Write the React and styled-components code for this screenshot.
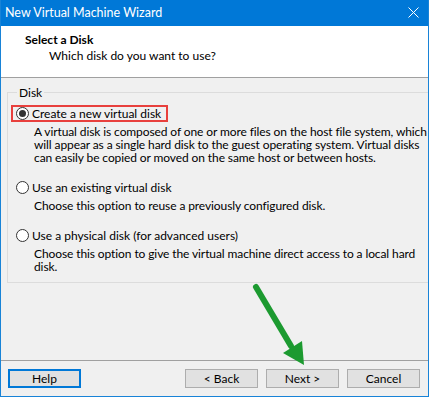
import React from 'react'
import styled, { createGlobalStyle } from 'styled-components'

const GlobalStyle = createGlobalStyle`
    html, body {
        margin: 0;
        padding: 0;
        background: #f0f0f0;
    }
    body {
        font-family: Lato, "Noto Sans", sans-serif;
        font-size: 12px;
        color: #000;
    }
`

const Window = styled.div`
    position: relative;
    width: 429px;
    height: 397px;
    box-sizing: border-box;
    border: 1px solid #1883d7;
    border-top: none;
    background: #f0f0f0;
    display: flex;
    flex-direction: column;
    overflow: hidden;
`

const TitleBar = styled.div`
    height: 25px;
    background: #0078d7;
    color: #fff;
    display: flex;
    align-items: center;
    justify-content: space-between;
    padding: 0 0 1px 4px;
    font-size: 12.5px;
`

const CloseButton = styled.div`
    width: 30px;
    height: 25px;
    display: flex;
    align-items: center;
    justify-content: center;
`

const Header = styled.div`
    height: 52px;
    background: #fff;
    border-bottom: 1px solid #a0a0a0;
    box-sizing: border-box;
    padding: 6px 0 0 24px;
`

const HeaderTitle = styled.div`
    font-weight: bold;
    line-height: 16px;
`

const HeaderSub = styled.div`
    padding-left: 24px;
    line-height: 16px;
`

const Body = styled.div`
    flex: 1;
    padding: 8px 8px 0 6px;
`

const Group = styled.fieldset`
    margin: 0;
    padding: 6px 2px 10px 4px;
    border: 1px solid #dcdcdc;
    height: 197px;
    box-sizing: border-box;
    display: flex;
    flex-direction: column;
    gap: 15px;
`

const Legend = styled.legend`
    padding: 0 2px;
    margin-left: 5px;
    line-height: 13px;
`

const Option = styled.div`
    display: flex;
    flex-direction: column;
    gap: 3px;
`

const OptionLabel = styled.label`
    display: inline-flex;
    align-items: center;
    gap: 3px;
    align-self: flex-start;
    height: 17px;
    padding: 0 5px 0 3px;
    margin-left: -1px;
    box-sizing: border-box;
    border: 2px solid ${p => (p.$highlight ? '#e8403d' : 'transparent')};
    line-height: 14px;
`

const Radio = styled.span`
    width: 11px;
    height: 11px;
    border-radius: 50%;
    border: 1px solid #333;
    background: #fff;
    display: flex;
    align-items: center;
    justify-content: center;
    flex-shrink: 0;

    &::after {
        content: '';
        width: 7px;
        height: 7px;
        border-radius: 50%;
        background: ${p => (p.$checked ? '#333' : 'transparent')};
    }
`

const Description = styled.div`
    padding-left: 22px;
    line-height: 13px;
`

const Line = styled.div`
    white-space: nowrap;
    letter-spacing: -0.1px;
    height: 13px;
`

const Footer = styled.div`
    border-top: 1px solid #a0a0a0;
    height: 36px;
    box-sizing: border-box;
    padding: 8px 7px 0 7px;
    display: flex;
    align-items: flex-start;
`

const Button = styled.button`
    width: 73px;
    height: 19px;
    padding: 0;
    box-sizing: border-box;
    font-family: inherit;
    font-size: 12px;
    line-height: 15px;
    color: #000;
    background: #e1e1e1;
    border: ${p => (p.$focused ? '2px solid #0078d7' : '1px solid #adadad')};
    margin-left: ${p => p.$gap || 0}px;
`

const Arrow = styled.svg`
    position: absolute;
    left: 240px;
    top: 275px;
    pointer-events: none;
`

const options = [
    {
        label: 'Create a new virtual disk',
        checked: true,
        lines: [
            'A virtual disk is composed of one or more files on the host file system, which',
            'will appear as a single hard disk to the guest operating system. Virtual disks',
            'can easily be copied or moved on the same host or between hosts.',
        ],
    },
    {
        label: 'Use an existing virtual disk',
        lines: ['Choose this option to reuse a previously configured disk.'],
    },
    {
        label: 'Use a physical disk (for advanced users)',
        lines: [
            'Choose this option to give the virtual machine direct access to a local hard',
            'disk.',
        ],
    },
]

const App = () => {
    return (
        <>
            <GlobalStyle />
            <Window>
                <TitleBar>
                    <span>New Virtual Machine Wizard</span>
                    <CloseButton>
                        <svg width="11" height="11" viewBox="0 0 11 11">
                            <path d="M0.5 0.5 L10.5 10.5 M10.5 0.5 L0.5 10.5" stroke="#fff" strokeWidth="1" />
                        </svg>
                    </CloseButton>
                </TitleBar>
                <Header>
                    <HeaderTitle>Select a Disk</HeaderTitle>
                    <HeaderSub>Which disk do you want to use?</HeaderSub>
                </Header>
                <Body>
                    <Group>
                        <Legend>Disk</Legend>
                        {options.map((o) => (
                            <Option key={o.label}>
                                <OptionLabel $highlight={o.checked}>
                                    <Radio $checked={o.checked} />
                                    {o.label}
                                </OptionLabel>
                                <Description>
                                    {o.lines.map((l) => (
                                        <Line key={l}>{l}</Line>
                                    ))}
                                </Description>
                            </Option>
                        ))}
                    </Group>
                </Body>
                <Footer>
                    <Button $focused>Help</Button>
                    <Button $gap={104}>&lt; Back</Button>
                    <Button $gap={8}>Next &gt;</Button>
                    <Button $gap={8}>Cancel</Button>
                </Footer>
                <Arrow width="80" height="95" viewBox="0 0 80 95">
                    <path d="M15 12 L50 71" stroke="#1c9a30" strokeWidth="6" strokeLinecap="round" />
                    <path d="M63 90 L42 78 L61 66 Z" fill="#1c9a30" />
                </Arrow>
            </Window>
        </>
    )
}

export default App
